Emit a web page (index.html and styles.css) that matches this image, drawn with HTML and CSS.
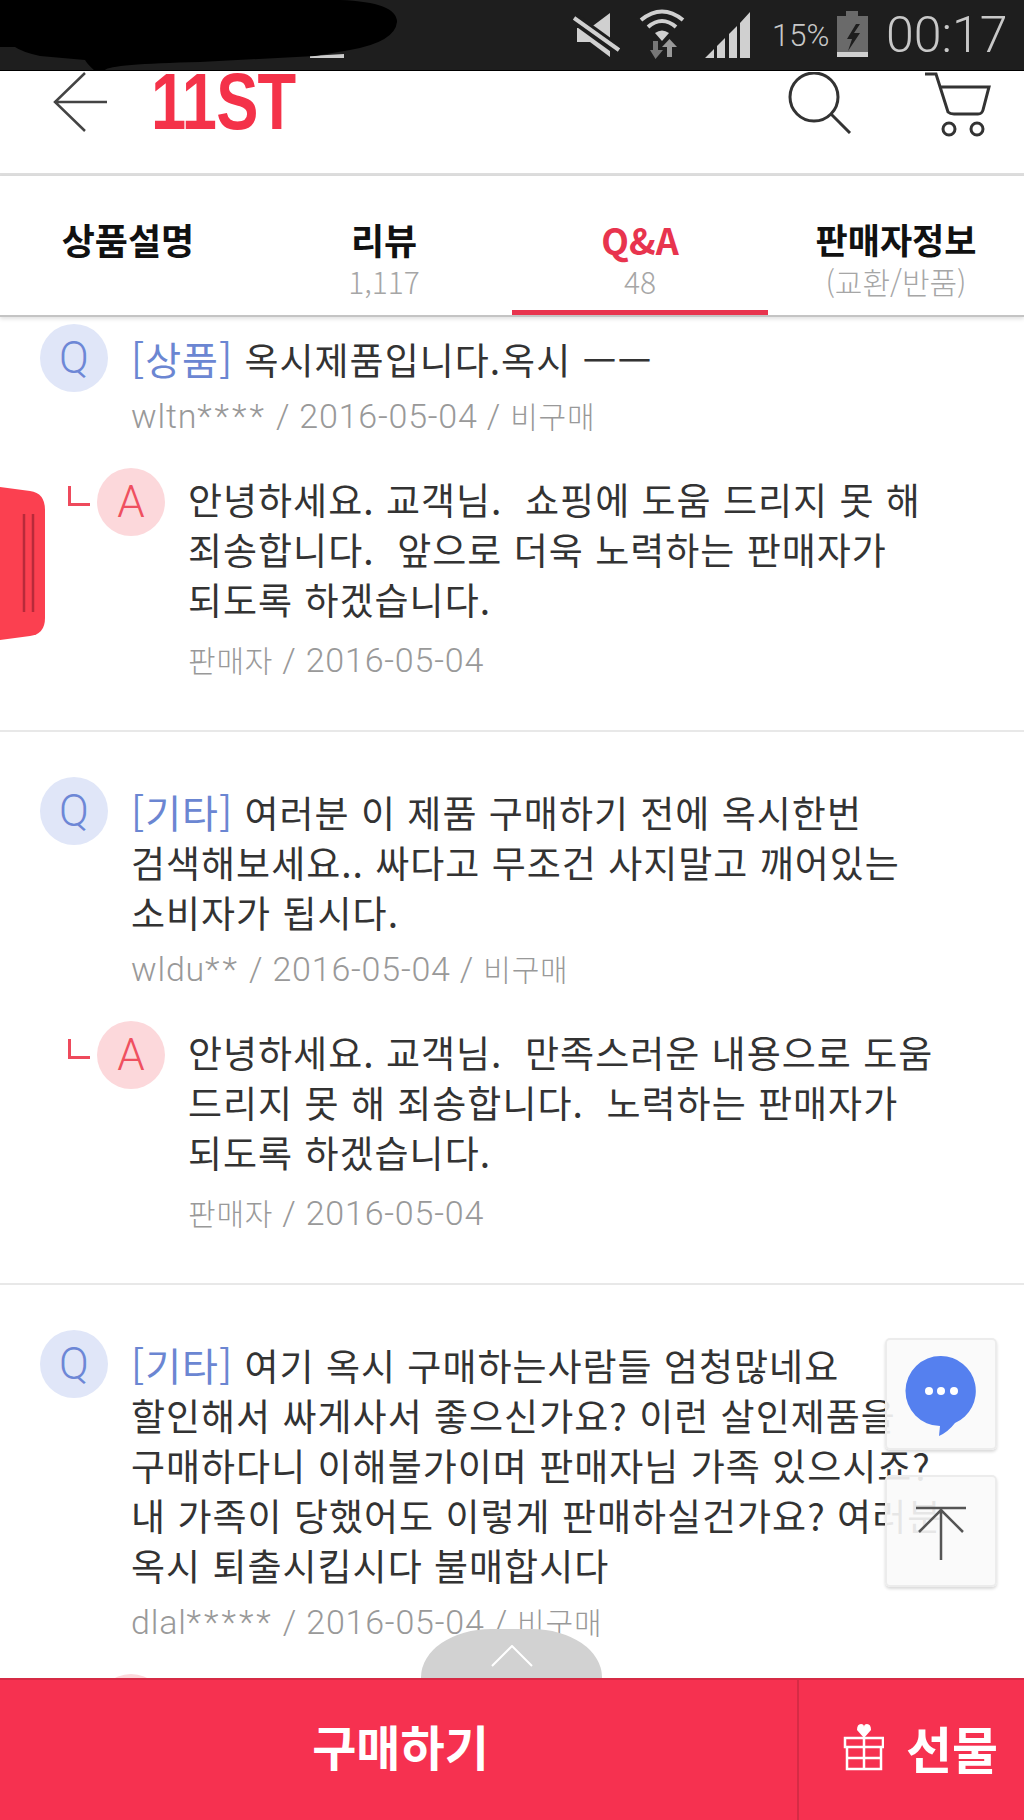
FILE: index.html
```html
<!DOCTYPE html>
<html lang="ko">
  <head>
    <meta charset="UTF-8" />
    <meta name="viewport" content="width=device-width, initial-scale=1.0" />
    <title>11ST Q&amp;A</title>
    <link rel="stylesheet" href="styles.css">
  </head>
  <body>
    <div class="page">
      <div class="statusbar">
        <svg class="blob" width="400" height="72" viewBox="0 0 400 72">
          <path fill="#ccc" d="M310 56 L344 54 V58 H310 Z" />
          <path fill="#000" d="M0 0 H340 Q397 2 397 22 Q395 42 350 50 L315 56 L200 62 Q110 64 105 70 L95 71 Q88 65 85 60 L40 56 Q22 52 15 47 L0 47 Z" />
        </svg>
        <svg class="st-mute" width="47" height="44" viewBox="573 13 47 44">
          <path fill="#d0d0d0" d="M577 28 H590 L610 13 V57 L590 42 H577 Z" />
          <path stroke="#1e1e1e" stroke-width="11" d="M571 16 L622 53" />
          <path stroke="#d0d0d0" stroke-width="4" d="M574 18 L619 50" />
        </svg>
        <svg class="st-wifi" width="48" height="50" viewBox="638 9 48 50">
          <g fill="none" stroke="#d0d0d0" stroke-width="4">
            <path d="M641 20 Q662 3 683 20" />
            <path d="M648 27 Q662 15 676 27" />
          </g>
          <path fill="#d0d0d0" d="M655 33 Q662 28 669 33 L662 41 Z" />
          <path fill="#777" d="M653 41 H658 V50 H663 L655.500 59 L650 50 H653 Z" />
          <path fill="#999" d="M667 57 H672 V47 H677 L669.500 39 L662 47 H667 Z" />
        </svg>
        <svg class="st-signal" width="46" height="46" viewBox="705 12 46 46">
          <path fill="#d0d0d0" d="M705 58 L714 49 V58 Z M717 46 L725 38 V58 H717 Z M729 34 L737 26 V58 H729 Z M740 23 L750 12 V58 H740 Z" />
        </svg>
        <span class="st-pct">15%</span>
        <svg class="st-batt" width="32" height="46" viewBox="838 11 32 46">
          <path fill="#6a6a6a" d="M847 11 H859 V16 H869 V52 H838 V16 H847 Z" />
          <rect fill="#d0d0d0" x="838" y="52" width="31" height="5" />
          <path fill="#1e1e1e" d="M857 24 L848 39 H853 L849 51 L861 33 H855 L861 24 Z" />
        </svg>
        <span class="st-time">00:17</span>
      </div>

      <div class="appbar">
        <svg class="back" width="54" height="60" viewBox="53 72 54 60">
          <path fill="none" stroke="#444" stroke-width="2.500" d="M85 73 L55 102 L85 131 M55 102 H107" />
        </svg>
        <span class="logo">11ST</span>
        <svg class="search" width="64" height="62" viewBox="788 72 64 62">
          <g fill="none" stroke="#333" stroke-width="3">
            <circle cx="814" cy="97" r="24" />
            <path d="M831 114 L850 133" />
          </g>
        </svg>
        <svg class="cart" width="66" height="66" viewBox="925 72 66 66">
          <g fill="none" stroke="#333" stroke-width="3">
            <path d="M925 74 H936 L948 112 Q950 114 954 114 H978 Q982 114 983 110 L989 87 H940" />
            <circle cx="949" cy="129" r="6" />
            <circle cx="977" cy="129" r="6" />
          </g>
        </svg>
      </div>

      <div class="tabs">
        <div class="tab"><span class="tab-name">상품설명</span></div>
        <div class="tab"><span class="tab-name">리뷰</span><span class="tab-sub">1,117</span></div>
        <div class="tab active"><span class="tab-name">Q&amp;A</span><span class="tab-sub">48</span></div>
        <div class="tab"><span class="tab-name narrow">판매자정보</span><span class="tab-sub">(교환/반품)</span></div>
      </div>

      <div class="list">
        <div class="item first">
          <div class="row">
            <span class="badge badge-q">Q</span>
            <div class="content">
              <p class="text"><span class="tag">[상품]</span> 옥시제품입니다.옥시 ㅡㅡ</p>
              <p class="meta">wltn<span class="mask">****</span> / 2016-05-04 / <small>비구매</small></p>
            </div>
          </div>
          <div class="row answer">
            <span class="reply-mark"></span>
            <span class="badge badge-a">A</span>
            <div class="content">
              <p class="text">안녕하세요. 교객님.  쇼핑에 도움 드리지 못 해<br>죄송합니다.  앞으로 더욱 노력하는 판매자가<br>되도록 하겠습니다.</p>
              <p class="meta"><small>판매자</small> / 2016-05-04</p>
            </div>
          </div>
        </div>

        <div class="item">
          <div class="row">
            <span class="badge badge-q">Q</span>
            <div class="content">
              <p class="text"><span class="tag">[기타]</span> 여러분 이 제품 구매하기 전에 옥시한번<br>검색해보세요.. 싸다고 무조건 사지말고 깨어있는<br>소비자가 됩시다.</p>
              <p class="meta">wldu<span class="mask">**</span> / 2016-05-04 / <small>비구매</small></p>
            </div>
          </div>
          <div class="row answer">
            <span class="reply-mark"></span>
            <span class="badge badge-a">A</span>
            <div class="content">
              <p class="text">안녕하세요. 교객님.  만족스러운 내용으로 도움<br>드리지 못 해 죄송합니다.  노력하는 판매자가<br>되도록 하겠습니다.</p>
              <p class="meta"><small>판매자</small> / 2016-05-04</p>
            </div>
          </div>
        </div>

        <div class="item">
          <div class="row">
            <span class="badge badge-q">Q</span>
            <div class="content">
              <p class="text"><span class="tag">[기타]</span> 여기 옥시 구매하는사람들 엄청많네요<br>할인해서 싸게사서 좋으신가요? 이런 살인제품을<br>구매하다니 이해불가이며 판매자님 가족 있으시죠?<br>내 가족이 당했어도 이렇게 판매하실건가요? 여러분<br>옥시 퇴출시킵시다 불매합시다</p>
              <p class="meta">dlal<span class="mask">*****</span> / 2016-05-04 / <small>비구매</small></p>
            </div>
          </div>
          <div class="row answer">
            <span class="badge badge-a"></span>
          </div>
        </div>
      </div>

      <div class="side-tab">
        <svg width="46" height="154" viewBox="0 487 46 154">
          <path fill="#fb4050" d="M0 487 L30 491 Q45 493 45 510 V618 Q45 634 30 636 L0 640 Z" />
          <path stroke="#b82a3a" stroke-width="2.500" d="M24 514 V612 M33 514 V612" />
        </svg>
      </div>

      <div class="floats">
        <div class="float-btn">
          <svg width="72" height="84" viewBox="905 1352 72 84">
            <path fill="#5580ef" d="M941 1356 A35 35 0 0 1 955 1423 Q948 1432 939 1436 L940 1426 A35 35 0 0 1 941 1356 Z" />
            <circle fill="#fff" cx="929" cy="1391" r="4" />
            <circle fill="#fff" cx="941" cy="1391" r="4" />
            <circle fill="#fff" cx="954" cy="1391" r="4" />
          </svg>
        </div>
        <div class="float-btn">
          <svg width="52" height="62" viewBox="915 1500 52 62">
            <path fill="none" stroke="#555" stroke-width="2.500" d="M916 1508 H966 M941 1508 V1560 M919 1532 L941 1510 L963 1532" />
          </svg>
        </div>
      </div>

      <div class="pull-up">
        <svg width="42" height="22" viewBox="0 0 42 22">
          <path fill="none" stroke="#fff" stroke-width="2" d="M1 21 L21 1 L41 21" />
        </svg>
      </div>

      <div class="buybar">
        <div class="buy">구매하기</div>
        <div class="gift">
          <svg width="42" height="47" viewBox="843 1727 42 47">
            <g fill="none" stroke="#fff" stroke-width="2.500">
              <path d="M846 1741 H884 V1750 H846 Z M848 1750 V1772 H882 V1750 M865 1741 V1772 M848 1761 H882" />
            </g>
            <path fill="#fff" d="M865 1741 L858 1733 Q858 1727 862 1727 Q865 1727 865 1730 Q865 1727 868 1727 Q872 1727 872 1733 Z" />
          </svg>
          <span>선물</span>
        </div>
      </div>
    </div>
  </body>
</html>
```

FILE: styles.css
```css
* {
  box-sizing: border-box;
}

body {
  margin: 0;
  background: #fff;
  font-family: "Noto Sans CJK KR", "Noto Sans", sans-serif;
}

p {
  margin: 0;
}

svg {
  display: block;
  flex-shrink: 0;
}

.page {
  position: relative;
  width: 1024px;
  height: 1820px;
  overflow: hidden;
  display: flex;
  flex-direction: column;
}

/* status bar */
.statusbar {
  position: relative;
  height: 71px;
  flex-shrink: 0;
  display: flex;
  align-items: flex-start;
  justify-content: flex-end;
  padding-right: 20px;
  background: #1e1e1e;
  border-bottom: 1px solid #000;
  color: #c8c8c8;
  font-family: Roboto, sans-serif;
  font-weight: 300;
}

.blob {
  position: absolute;
  left: 0;
  top: 0;
}

.st-mute {
  margin: 13px 18px 0 0;
}

.st-wifi {
  margin: 9px 19px 0 0;
}

.st-signal {
  margin: 12px 21px 0 0;
}

.st-pct {
  margin: 17px 9px 0 0;
  width: 56px;
  font-size: 31px;
  line-height: 38px;
  white-space: nowrap;
}

.st-batt {
  margin: 11px 17px 0 0;
}

.st-time {
  width: 118px;
  font-size: 50px;
  line-height: 70px;
  white-space: nowrap;
}

/* app bar */
.appbar {
  height: 105px;
  flex-shrink: 0;
  display: flex;
  align-items: flex-start;
  background: #fff;
  border-bottom: 3px solid #ddd;
}

.back {
  margin: 1px 0 0 53px;
}

.logo {
  width: 140px;
  margin: 0 0 0 44px;
  font-family: "Liberation Sans", sans-serif;
  font-weight: 700;
  font-size: 80px;
  line-height: 62px;
  letter-spacing: -1px;
  color: #f43249;
  height: 62px;
  transform: scaleX(0.79);
  transform-origin: left center;
  white-space: nowrap;
}

.search {
  margin: 1px 0 0 auto;
}

.cart {
  margin: 1px 33px 0 73px;
}

/* tabs */
.tabs {
  position: relative;
  z-index: 1;
  height: 141px;
  flex-shrink: 0;
  display: grid;
  grid-template-columns: repeat(4, 256px);
  background: #fff;
  border-bottom: 2px solid #c4c4c4;
  box-shadow: 0 2px 4px rgba(0, 0, 0, 0.12);
}

.tab {
  display: flex;
  flex-direction: column;
  align-items: center;
  padding-top: 39px;
  height: 139px;
}

.tab-name {
  font-size: 36px;
  font-weight: 700;
  line-height: 48px;
  color: #111;
  white-space: nowrap;
}

.tab-name.narrow {
  font-size: 35px;
}

.tab-sub {
  font-size: 30px;
  line-height: 36px;
  font-weight: 300;
  color: #a6a6a6;
  white-space: nowrap;
}

.tab.active {
  border-bottom: 5px solid #e8344e;
}

.tab.active .tab-name {
  color: #e8344e;
}

/* q&a list */
.list {
  flex: 1;
  min-height: 0;
  overflow: hidden;
  background: #fff;
}

.item {
  padding: 45px 0 50px;
  border-bottom: 2px solid #e8e8e8;
}

.item.first {
  padding-top: 7px;
}

.row {
  display: flex;
  align-items: flex-start;
  padding-left: 40px;
}

.answer {
  position: relative;
  margin-top: 32px;
  padding-left: 97px;
}

.reply-mark {
  position: absolute;
  left: 68px;
  top: 18px;
  width: 22px;
  height: 20px;
  border-left: 3px solid #ee4a5c;
  border-bottom: 3px solid #ee4a5c;
}

.badge {
  width: 68px;
  height: 68px;
  flex-shrink: 0;
  border-radius: 50%;
  display: flex;
  align-items: center;
  justify-content: center;
  font-family: Roboto, sans-serif;
  font-weight: 300;
  font-size: 44px;
}

.badge-q {
  background: #e0e6f8;
  color: #6d87d6;
}

.badge-a {
  background: #fcd8db;
  color: #ef5060;
}

.content {
  margin-left: 23px;
  padding-top: 10px;
  min-width: 0;
}

.answer .content {
  padding-top: 6px;
}

.text {
  font-size: 37px;
  line-height: 50px;
  letter-spacing: 1px;
  color: #333;
  white-space: pre;
}

.tag {
  font-size: 39px;
  line-height: 1;
  color: #6b86d2;
}

.meta {
  margin-top: 12px;
  font-family: Roboto, "Noto Sans CJK KR", sans-serif;
  font-weight: 300;
  font-size: 34px;
  line-height: 40px;
  letter-spacing: 0.8px;
  color: #999;
  white-space: nowrap;
}

.mask {
  letter-spacing: 3px;
}

.answer .meta {
  margin-top: 16px;
}

.meta small {
  font-family: "Noto Sans CJK KR", sans-serif;
  font-size: 30px;
  line-height: 1;
}

/* things lying over the list */
.side-tab {
  position: absolute;
  left: 0;
  top: 487px;
}

.floats {
  position: absolute;
  right: 27px;
  top: 1338px;
  display: flex;
  flex-direction: column;
  gap: 25px;
}

.float-btn {
  width: 112px;
  height: 112px;
  display: flex;
  align-items: center;
  justify-content: center;
  background: rgba(250, 250, 250, 0.9);
  border: 2px solid #ececec;
  border-radius: 5px;
  box-shadow: 0 2px 3px rgba(0, 0, 0, 0.15);
}

.pull-up {
  position: absolute;
  left: 421px;
  top: 1629px;
  width: 181px;
  height: 49px;
  display: flex;
  justify-content: center;
  padding-top: 16px;
  background: #d2d2d2;
  border-radius: 70px 70px 0 0 / 48px 48px 0 0;
}

/* bottom bar */
.buybar {
  position: relative;
  height: 142px;
  flex-shrink: 0;
  display: flex;
  background: #f63150;
  border-top: 2px solid #d62b45;
  color: #fff;
  font-weight: 700;
}

.buy {
  width: 799px;
  display: flex;
  align-items: center;
  justify-content: center;
  padding: 0 0 10px 4px;
  font-size: 48px;
  border-right: 2px solid #d62b45;
}

.gift {
  flex: 1;
  display: flex;
  align-items: center;
  gap: 22px;
  padding: 0 0 6px 43px;
  font-size: 50px;
}
```
